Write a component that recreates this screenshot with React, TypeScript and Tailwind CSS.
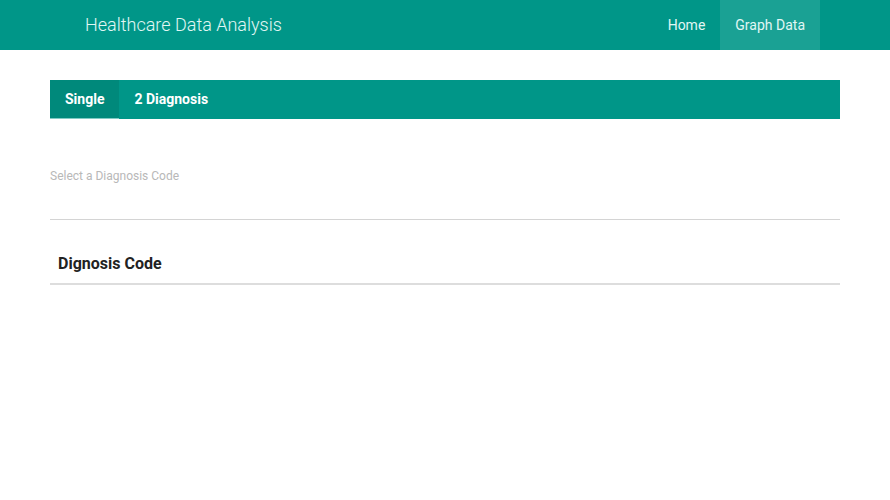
import React from "react";

const App: React.FC = () => {
    const tabs = ["Single", "2 Diagnosis"];

    return (
        <div className="min-h-[500px] bg-white font-['Roboto',sans-serif]">
            {/* Navbar */}
            <nav className="h-[50px] bg-[#009688]">
                <div className="w-[750px] mx-auto px-[15px] h-full flex items-center justify-between">
                    <span className="text-[18px] font-light text-[#e0f7f4] -mt-px">
                        Healthcare Data Analysis
                    </span>
                    <ul className="flex h-full -mr-[15px]">
                        <li className="h-full flex items-center px-[15px] text-[14px] text-[#e0f7f4]">
                            Home
                        </li>
                        <li className="h-full flex items-center px-[15px] text-[14px] text-[#e0f7f4] bg-white/10">
                            Graph Data
                        </li>
                    </ul>
                </div>
            </nav>

            <div className="mx-[50px] mt-[30px]">
                {/* Tabs */}
                <div className="flex h-[39px] bg-[#009688]">
                    {tabs.map((tab, index) => (
                        <div
                            key={tab}
                            className={
                                index === 0
                                    ? "h-full flex items-center px-[15px] text-[14px] font-bold text-white bg-[#00897b] border-b border-[#80cbc4]"
                                    : "h-full flex items-center px-[15px] text-[14px] font-bold text-white"
                            }
                        >
                            {tab}
                        </div>
                    ))}
                </div>

                {/* Select */}
                <div className="mt-[48px] text-[12px] text-[#b8b8b8]">
                    Select a Diagnosis Code
                </div>
                <div className="mt-[34px] h-px bg-[#d4d4d4]" />

                {/* Table header */}
                <div className="mt-[32px] px-[8px] pb-[7px] border-b-2 border-[#dddddd] text-[16px] font-bold text-[#222222]">
                    Dignosis Code
                </div>
            </div>
        </div>
    );
};

export default App;
